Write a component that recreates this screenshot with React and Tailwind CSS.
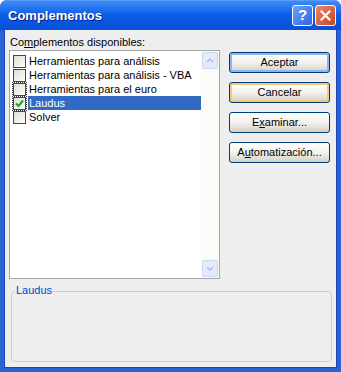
import React from "react";

const font = { fontFamily: "'Liberation Sans', Arial, sans-serif" };

function Check({ checked, focus }) {
  return (
    <div className={`w-[15px] h-[15px] flex items-center justify-center ${focus ? "outline outline-1 outline-dotted outline-[#333] -outline-offset-1" : ""}`}>
      <div className="w-[13px] h-[13px] border border-[#1c5180] bg-gradient-to-br from-[#dcdcd7] to-white flex items-center justify-center">
        {checked && (
          <svg width="9" height="9" viewBox="0 0 9 9">
            <path d="M1 4.5 L3.5 7 L8 1.5" stroke="#21a121" strokeWidth="2" fill="none" />
          </svg>
        )}
      </div>
    </div>
  );
}

function Row({ label, checked, selected, focus }) {
  return (
    <div className="h-[14px] flex items-center pl-[2px] whitespace-nowrap">
      <Check checked={checked} focus={focus} />
      <div className={`ml-[1px] h-[14px] flex items-center pl-[1px] pr-[2px] text-[11px] leading-none ${selected ? "bg-[#316ac5] text-white flex-1" : "text-black"}`}>
        {label}
      </div>
    </div>
  );
}

function Btn({ children, variant }) {
  const inner =
    variant === "default"
      ? "shadow-[inset_0_0_0_2px_#8eb4ee]"
      : variant === "hover"
      ? "shadow-[inset_0_0_0_2px_#f5c77a]"
      : "";
  return (
    <div className={`w-[101px] h-[21px] rounded-[3px] border border-[#003c74] bg-gradient-to-b from-white via-[#f2f2ee] to-[#d6d0c5] flex items-center justify-center text-[11px] text-black whitespace-nowrap ${inner}`}>
      {children}
    </div>
  );
}

function ScrollArrow({ up }) {
  return (
    <div className="w-[16px] h-[17px] rounded-[2px] border border-[#c9d8f3] bg-[#e3ebfb] flex items-center justify-center">
      <svg width="8" height="5" viewBox="0 0 8 5">
        <path d={up ? "M1 4 L4 1 L7 4" : "M1 1 L4 4 L7 1"} stroke="#a9bde8" strokeWidth="1.6" fill="none" />
      </svg>
    </div>
  );
}

export default function App() {
  return (
    <div className="w-[341px] h-[372px] flex flex-col rounded-t-[7px] bg-[#2a63d6] overflow-hidden" style={font}>
      <div className="h-[30px] shrink-0 flex items-center justify-between pl-[8px] pr-[5px] bg-gradient-to-b from-[#3d8bf6] via-[#0a5ce6] to-[#0750d8] border-t border-[#5a9cfa]">
        <span
          className="text-white font-bold text-[13px]"
          style={{ textShadow: "1px 1px 0 #0a1e7a" }}
        >
          Complementos
        </span>
        <div className="flex gap-[2px] items-center">
          <div className="w-[21px] h-[21px] rounded-[3px] border border-white bg-gradient-to-br from-[#6ea2f7] to-[#2a66e0] flex items-center justify-center text-white font-bold text-[15px]">
            ?
          </div>
          <div className="w-[21px] h-[21px] rounded-[3px] border border-white bg-gradient-to-br from-[#e8896a] to-[#c7401c] flex items-center justify-center">
            <svg width="11" height="11" viewBox="0 0 11 11">
              <path d="M1.5 1.5 L9.5 9.5 M9.5 1.5 L1.5 9.5" stroke="white" strokeWidth="2.2" strokeLinecap="square" />
            </svg>
          </div>
        </div>
      </div>
      <div className="flex-1 mx-[4px] mb-[4px] bg-[#eeeeee] border-l border-r border-b border-[#1c46b8] flex flex-col">
        <div className="pt-[6px] pl-[5px] text-[11px] leading-[13px] text-black">
          Co<span className="underline">m</span>plementos disponibles:
        </div>
        <div className="flex mt-[1px] pl-[4px]">
          <div className="w-[211px] h-[229px] border border-[#a5a5a5] bg-white flex">
            <div className="flex-1 pt-[3px] min-w-0">
              <Row label="Herramientas para análisis" />
              <Row label="Herramientas para análisis - VBA" />
              <Row label="Herramientas para el euro" focus />
              <Row label="Laudus" checked selected focus />
              <Row label="Solver" />
            </div>
            <div className="w-[18px] bg-[#fbfbf8] flex flex-col justify-between p-[1px]">
              <ScrollArrow up />
              <ScrollArrow />
            </div>
          </div>
          <div className="ml-[9px] pt-[2px] flex flex-col gap-[9px]">
            <Btn variant="default">Aceptar</Btn>
            <Btn variant="hover">Cancelar</Btn>
            <Btn>
              <span>E<span className="underline">x</span>aminar...</span>
            </Btn>
            <Btn>
              <span>A<span className="underline">u</span>tomatización...</span>
            </Btn>
          </div>
        </div>
        <div className="relative mt-[12px] ml-[6px] w-[321px] h-[71px] rounded-[4px] border border-[#d0d0bf]">
          <span className="absolute -top-[8px] left-[3px] px-[1px] bg-[#eeeeee] text-[11px] leading-[13px] text-[#0046d5]">
            Laudus
          </span>
        </div>
      </div>
    </div>
  );
}
